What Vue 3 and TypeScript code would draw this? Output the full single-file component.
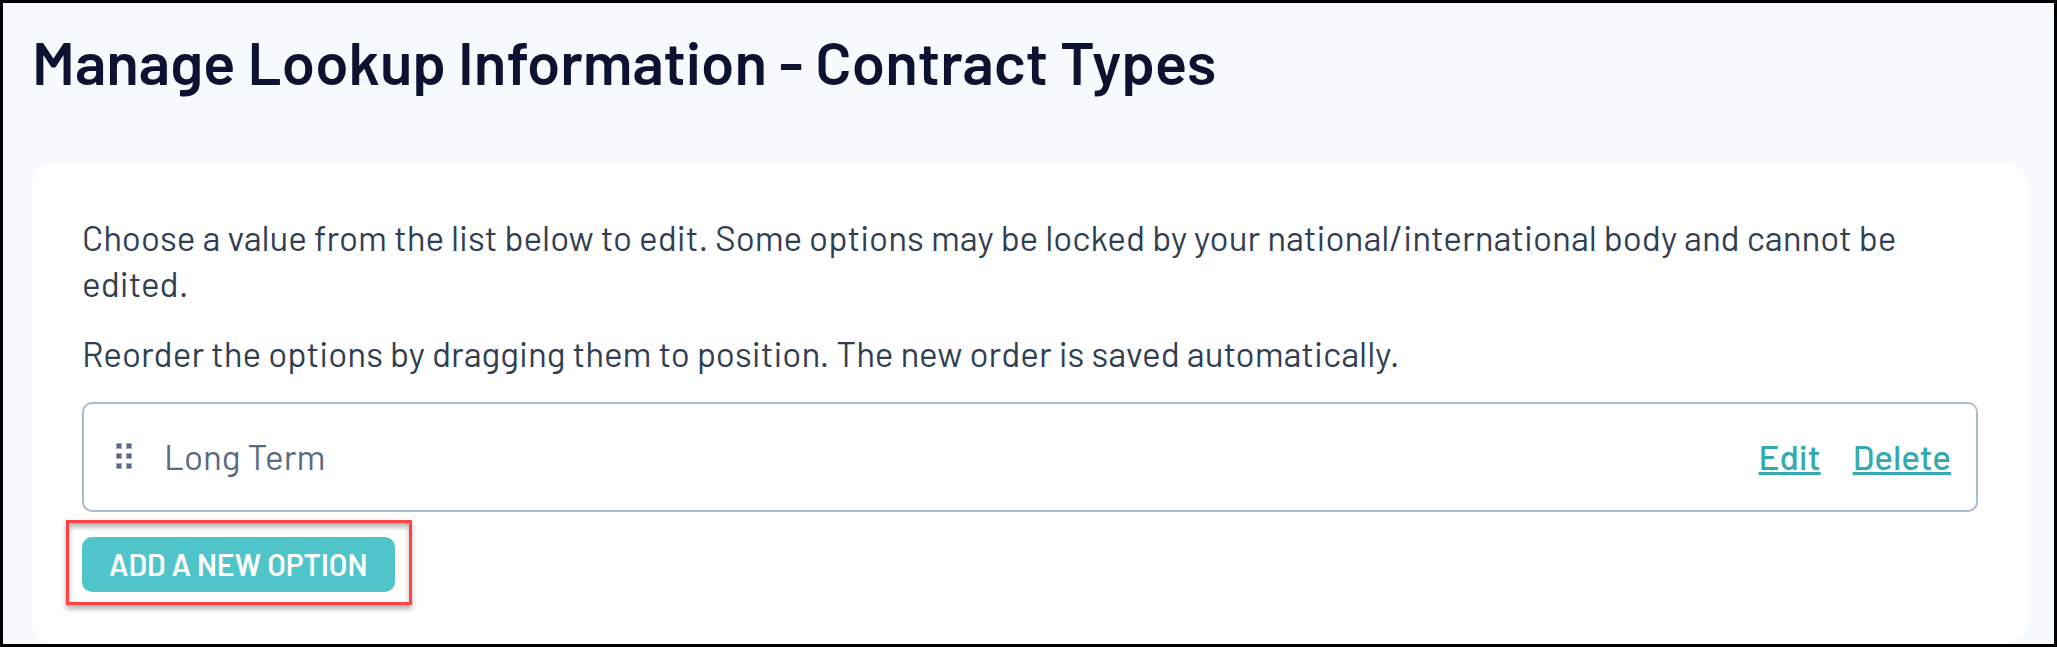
<script setup lang="ts">
import { ref } from 'vue'

interface LookupOption {
  id: number
  name: string
}

const options = ref<LookupOption[]>([{ id: 1, name: 'Long Term' }])
const dots = [0, 10, 20].flatMap((y) => [0, 10].map((x) => ({ x, y })))
</script>

<template>
  <main class="page">
    <h1 class="title">Manage Lookup Information - Contract Types</h1>
    <section class="card">
      <p class="text">
        Choose a value from the list below to edit. Some options may be locked by your
        national/international body and cannot be edited.
      </p>
      <p class="text">
        Reorder the options by dragging them to position. The new order is saved automatically.
      </p>
      <ul class="list">
        <li v-for="option in options" :key="option.id" class="row" draggable="true">
          <svg class="handle" viewBox="0 0 16 26" aria-hidden="true">
            <g v-for="dot in dots" :key="`${dot.x}-${dot.y}`">
              <rect :x="dot.x" :y="dot.y" width="6" height="6" fill="#a3adbd" />
              <rect :x="dot.x + 1" :y="dot.y + 1" width="4" height="4" fill="#56678a" />
            </g>
          </svg>
          <span class="name">{{ option.name }}</span>
          <a class="link" href="#edit">Edit</a>
          <a class="link" href="#delete">Delete</a>
        </li>
      </ul>
      <div class="actions">
        <button class="add" type="button">ADD A NEW OPTION</button>
      </div>
    </section>
  </main>
</template>

<style>
body {
  margin: 0;
}
</style>

<style scoped>
.page {
  box-sizing: border-box;
  min-height: 100vh;
  padding: 22px 26px 2px 29px;
  border: 3px solid #000;
  background: #f6fafd;
  font-family: Barlow, Roboto, sans-serif;
}

.title {
  margin: 0 0 67px;
  color: #0c1230;
  font-size: 60px;
  font-weight: 600;
  line-height: 72px;
}

.card {
  padding: 50px;
  border-radius: 20px;
  background: #fff;
}

.text {
  margin: 0 0 24px;
  color: #323f52;
  font-size: 35px;
  font-weight: 400;
  line-height: 46px;
}

.list {
  margin: 26px 0 0;
  padding: 0;
  list-style: none;
}

.row {
  display: flex;
  align-items: center;
  box-sizing: border-box;
  min-height: 110px;
  padding: 0 25px 2px 32px;
  border: 2px solid #adbacc;
  border-radius: 10px;
  font-size: 35px;
  line-height: 46px;
}

.handle {
  width: 16px;
  height: 26px;
  cursor: grab;
}

.name {
  margin: 0 auto 0 32px;
  color: #5a6985;
}

.link {
  margin-left: 32px;
  color: #33aab0;
  font-weight: 500;
  text-decoration: underline;
  text-decoration-thickness: 3px;
  text-underline-offset: 2px;
  text-decoration-skip-ink: none;
}

.actions {
  display: inline-block;
  margin: 8px 0 -13px -16px;
  padding: 14px 14px 10px 13px;
  border: 3px solid #ff4343;
  box-shadow: 0 4px 5px rgba(0, 0, 0, 0.3), inset 0 4px 5px rgba(0, 0, 0, 0.3);
}

.add {
  display: block;
  padding: 4px 27px 5px;
  border: 0;
  border-radius: 10px;
  background: #4fc5ca;
  color: #fff;
  font-family: inherit;
  font-size: 30px;
  font-weight: 600;
  line-height: 46px;
  cursor: pointer;
}
</style>
